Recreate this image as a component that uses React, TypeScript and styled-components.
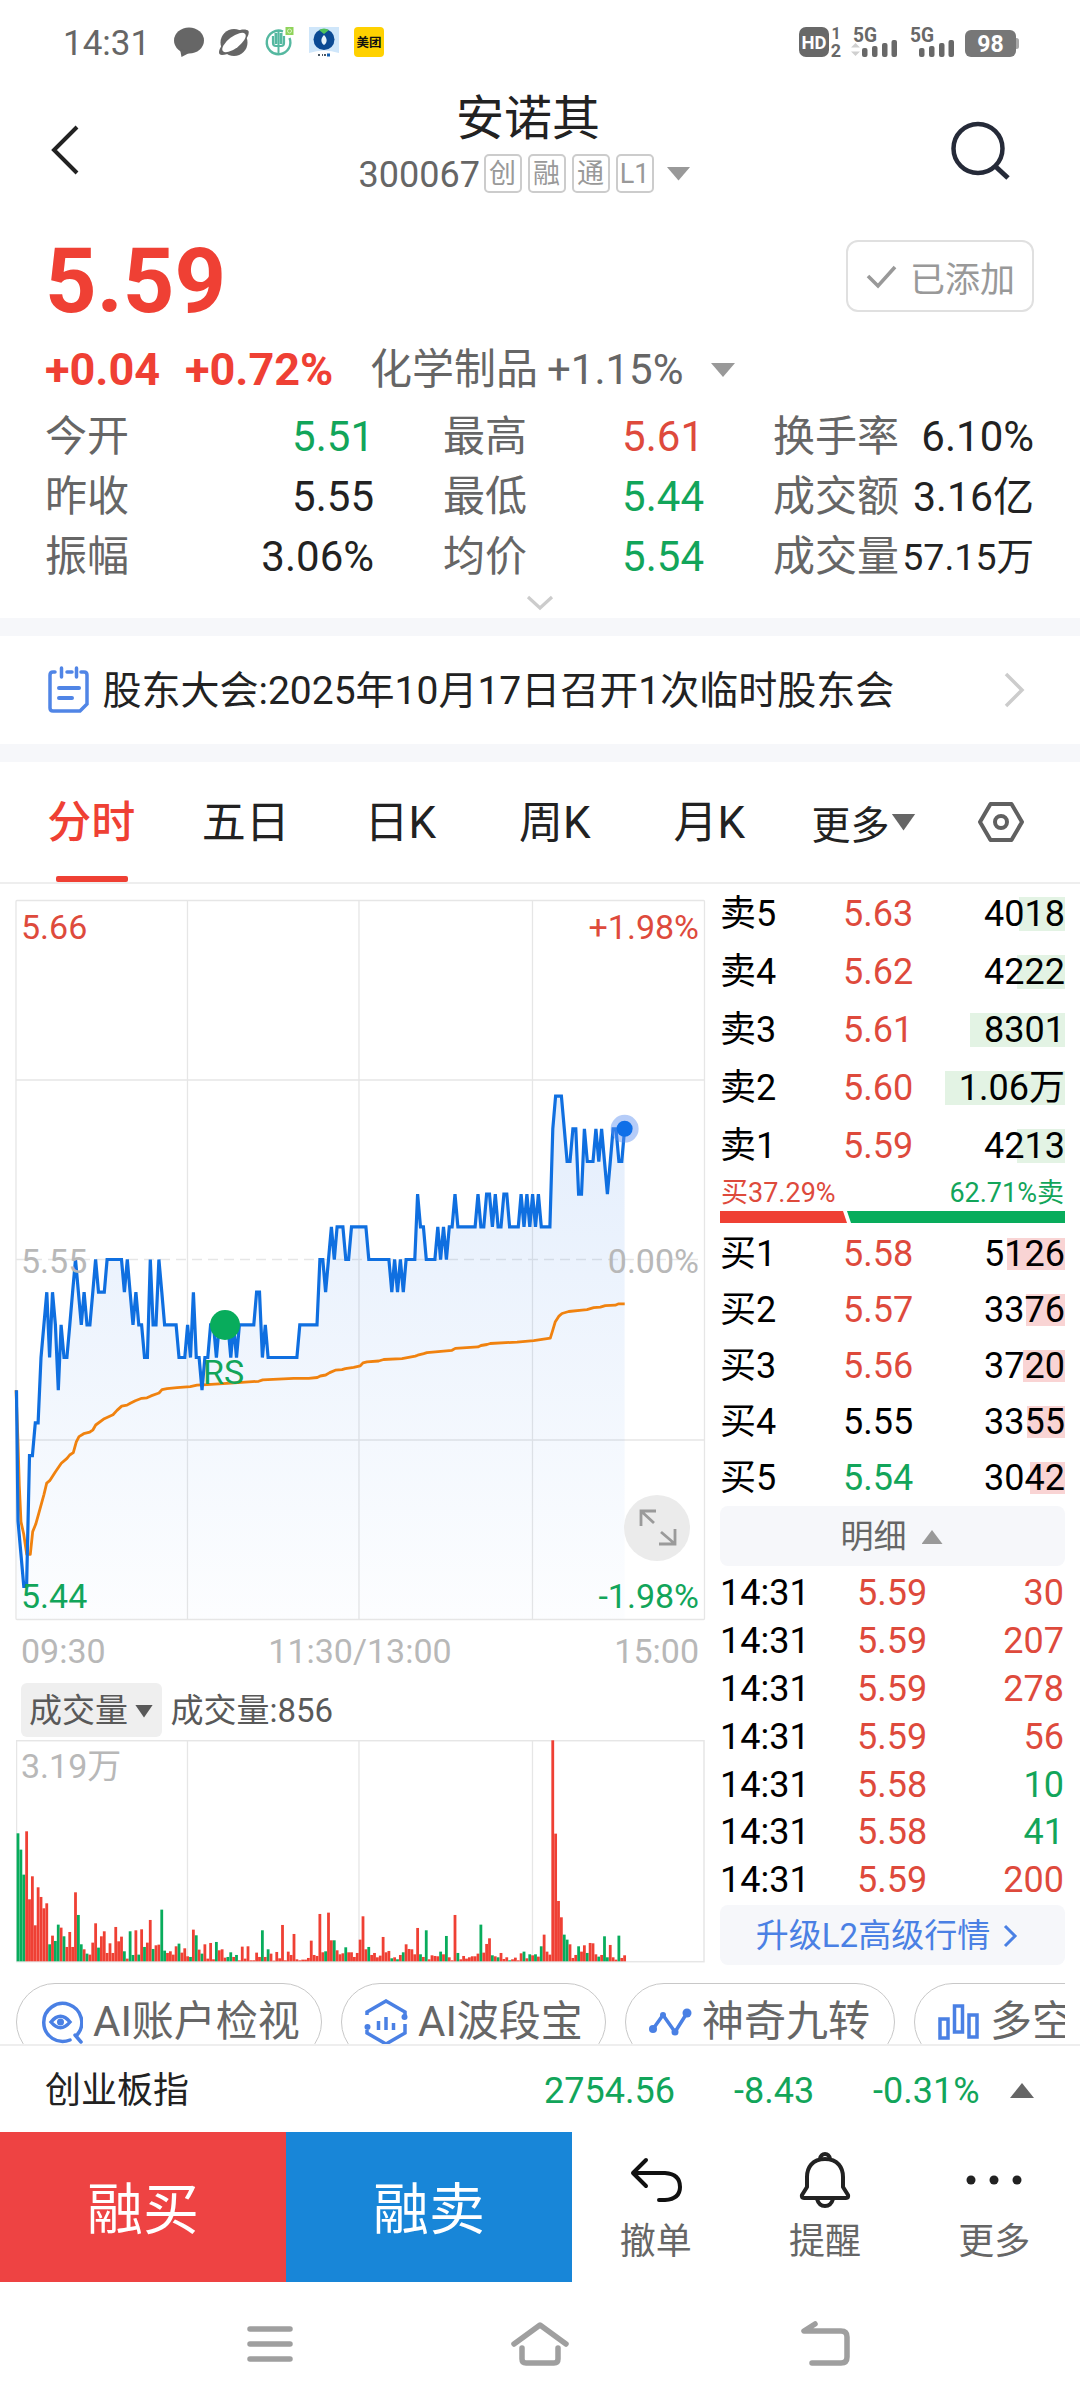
import React from 'react';
import styled, { createGlobalStyle } from 'styled-components';

const RED = '#ef4034';
const UP = '#de4a3c';
const DOWN = '#12a55a';
const GREEN = '#08ac5c';
const INK = '#222';
const GREY = '#666';
const BLUE = '#4a80e4';

const GlobalStyle = createGlobalStyle`
  * { box-sizing: border-box; }
  body { margin: 0; background: #fff; }
  svg { display: block; flex: none; }
`;

const Page = styled.div`
  width: 1080px;
  height: 2408px;
  overflow: hidden;
  display: flex;
  flex-direction: column;
  background: #fff;
  color: ${INK};
  font-family: Roboto, 'Noto Sans CJK SC', sans-serif;
  white-space: nowrap;
`;

/* ---------- status bar ---------- */

const StatusBar = styled.div`
  height: 84px;
  display: flex;
  align-items: center;
  justify-content: space-between;
  padding: 0 61px 0 63px;
`;
const StatusGroup = styled.div<{ $gap: number }>`
  display: flex;
  align-items: center;
  gap: ${(p) => p.$gap}px;
`;
const Clock = styled.span`
  width: 96px;
  font-size: 35px;
  line-height: 40px;
  padding-top: 3px;
  color: ${GREY};
`;

/* ---------- header ---------- */

const Header = styled.header`
  height: 120px;
  display: grid;
  grid-template-columns: 120px 812px 148px;
`;
const HeaderSide = styled.div<{ $pad: number }>`
  padding: 36px 0 0 ${(p) => p.$pad}px;
`;
const TitleBlock = styled.div`
  display: flex;
  flex-direction: column;
  align-items: center;
  padding: 5px 4px 0 0;
`;
const Title = styled.h1`
  margin: 0 0 5px 8px;
  font-size: 48px;
  line-height: 60px;
  font-weight: 400;
`;
const CodeRow = styled.div`
  display: flex;
  align-items: center;
  height: 39px;
  font-size: 36px;
  line-height: 39px;
  color: ${GREY};
`;
const Code = styled.span`
  width: 126px;
  padding: 3px 0 0 1px;
`;
const Tag = styled.span`
  width: 38px;
  height: 39px;
  margin-right: 6px;
  border: 2px solid #ccc;
  border-radius: 5px;
  font-size: 27px;
  line-height: 37px;
  text-align: center;
  color: #999;
`;

const Caret = styled.i<{ $w: number; $h: number; $color: string; $up?: boolean; $ml?: number }>`
  display: block;
  flex: none;
  width: ${(p) => p.$w}px;
  height: ${(p) => p.$h}px;
  margin-left: ${(p) => p.$ml ?? 0}px;
  background: ${(p) => p.$color};
  clip-path: ${(p) => (p.$up ? 'polygon(50% 0, 100% 100%, 0 100%)' : 'polygon(0 0, 100% 0, 50% 100%)')};
`;

/* ---------- quote ---------- */

const Quote = styled.section`
  height: 414px;
  padding: 36px 46px 0 45px;
`;
const PriceRow = styled.div`
  height: 72px;
  display: flex;
  align-items: center;
  justify-content: space-between;
`;
const Price = styled.div`
  padding-top: 12px;
  font-size: 90px;
  line-height: 72px;
  font-weight: 700;
  color: ${RED};
`;
const AddedButton = styled.button`
  width: 188px;
  height: 72px;
  padding: 0 0 0 17px;
  display: flex;
  align-items: center;
  gap: 12px;
  border: 2px solid #e0e0e0;
  border-radius: 12px;
  background: #fff;
  font: inherit;
  font-size: 35px;
  color: #999;
`;
const ChangeRow = styled.div`
  height: 60px;
  margin-top: 28px;
  display: grid;
  grid-template-columns: 140px 185px 177px 164px auto;
  align-items: center;
  font-size: 42px;
  line-height: 60px;
  color: ${GREY};
`;
const Change = styled.b`
  font-size: 45px;
  font-weight: 700;
  color: ${RED};
`;
const Stats = styled.div`
  margin-top: 7px;
  display: grid;
  grid-template-columns: 329px 261px 261px;
  column-gap: 69px;
`;
const Stat = styled.div<{ $color: string; $size?: number }>`
  height: 60px;
  display: flex;
  justify-content: space-between;
  font-size: 42px;
  line-height: 60px;
  color: ${GREY};
  > b {
    font-weight: 400;
    font-size: ${(p) => p.$size ?? 42}px;
    color: ${(p) => p.$color};
  }
`;
const Expand = styled.div`
  display: flex;
  justify-content: center;
  padding: 8px 0 0 1px;
`;

const Notice = styled.section`
  height: 144px;
  border: solid #f6f7fa;
  border-width: 18px 0;
  display: flex;
  align-items: center;
  padding: 0 55px 0 47px;
  font-size: 39px;
`;
const NoticeText = styled.span`
  flex: 1;
  padding: 2px 0 0 12.5px;
  line-height: 60px;
`;

/* ---------- period tabs ---------- */

const Tabs = styled.nav`
  height: 122px;
  border-bottom: 2px solid #eee;
  display: grid;
  grid-template-columns: repeat(5, 154.5px) 189px auto;
  padding-left: 14px;
`;
const Tab = styled.div<{ $active?: boolean }>`
  display: flex;
  flex-direction: column;
  align-items: center;
  font-size: 44px;
  font-weight: ${(p) => (p.$active ? 500 : 400)};
  line-height: 122px;
  height: 120px;
  color: ${(p) => (p.$active ? RED : INK)};
  &::after {
    content: '';
    width: 72px;
    height: 6px;
    margin: -8px 0 0 1px;
    border-radius: 2px;
    background: ${(p) => (p.$active ? RED : 'transparent')};
  }
`;
const MoreTab = styled.div`
  display: flex;
  align-items: center;
  padding-left: 25px;
  font-size: 39px;
  gap: 2px;
`;
const SettingsTab = styled.div`
  display: flex;
  align-items: center;
  padding-left: 2px;
`;

/* ---------- market ---------- */

const Market = styled.section`
  height: 1081px;
  display: grid;
  grid-template-columns: 689px 345px;
  column-gap: 15px;
  padding: 0 15px 0 16px;
`;
const Charts = styled.div`
  padding-top: 16px;
`;
const PriceChart = styled.div`
  position: relative;
  height: 720px;
`;
type LabelProps = { $top: number; $left?: number; $right?: number; $color: string };
const ChartLabel = styled.span<LabelProps>`
  position: absolute;
  top: ${(p) => p.$top}px;
  ${(p) => (p.$left !== undefined ? `left: ${p.$left}px;` : `right: ${p.$right}px;`)}
  font-size: 34px;
  line-height: 40px;
  color: ${(p) => p.$color};
`;
const ExpandButton = styled.div`
  position: absolute;
  right: 15px;
  top: 595px;
  width: 66px;
  height: 66px;
  border-radius: 50%;
  background: #ebebeb;
`;
const TimeAxis = styled.div`
  height: 62px;
  display: flex;
  justify-content: space-between;
  padding: 0 6px 0 5px;
  font-size: 34px;
  line-height: 62px;
  color: #b8b8b8;
`;
const VolumeHead = styled.div`
  height: 58px;
  display: flex;
  align-items: center;
  gap: 8.5px;
  padding: 0 0 2px 5px;
  font-size: 33px;
  line-height: 54px;
  color: #595959;
  > span {
    padding-top: 2px;
  }
`;
const VolumeSelect = styled.div`
  width: 141px;
  height: 54px;
  display: flex;
  align-items: center;
  gap: 7px;
  padding: 2px 0 0 8px;
  border-radius: 6px;
  background: #efefef;
`;
const VolumeChart = styled.div`
  position: relative;
  height: 223px;
`;

const Book = styled.div`
  display: flex;
  flex-direction: column;
  padding-top: 1px;
  color: #000;
`;
const BookRow = styled.div<{ $h: number }>`
  height: ${(p) => p.$h}px;
  display: grid;
  grid-template-columns: 123px 1fr 125px;
  align-items: center;
  font-size: 36px;
  line-height: ${(p) => p.$h}px;
`;
const BookPrice = styled.span<{ $color: string }>`
  color: ${(p) => p.$color};
`;
const Qty = styled.span<{ $bar: number; $tint: string; $h: number }>`
  height: ${(p) => p.$h}px;
  line-height: ${(p) => p.$h}px;
  text-align: right;
  background: linear-gradient(${(p) => p.$tint}, ${(p) => p.$tint}) right / ${(p) => p.$bar}px 100% no-repeat;
`;
const Ratio = styled.div`
  height: 36px;
  display: flex;
  justify-content: space-between;
  padding: 0 1px;
  font-size: 27px;
  line-height: 36px;
`;
const RatioBar = styled.div`
  height: 15px;
  display: flex;
`;
const RatioPart = styled.div<{ $w?: number; $color: string; $clip: string }>`
  ${(p) => (p.$w ? `width: ${p.$w}px;` : 'flex: 1;')}
  height: 12px;
  background: ${(p) => p.$color};
  clip-path: ${(p) => p.$clip};
`;
const PanelButton = styled.div<{ $gap: number; $color: string; $pr?: number }>`
  height: 60px;
  padding: 2px ${(p) => p.$pr ?? 0}px 0 0;
  display: flex;
  align-items: center;
  justify-content: center;
  gap: ${(p) => p.$gap}px;
  border-radius: 8px;
  background: #f6f7fa;
  font-size: 33px;
  line-height: 58px;
  color: ${(p) => p.$color};
`;
const Trades = styled.div`
  height: 339px;
  padding: 3px 1px 0 0;
`;
const Trade = styled.div`
  height: 47.9px;
  display: grid;
  grid-template-columns: 137px 1fr auto;
  font-size: 36px;
  line-height: 48px;
`;
const Colored = styled.span<{ $color: string }>`
  color: ${(p) => p.$color};
`;

/* ---------- tools, index, actions ---------- */

const Tools = styled.div`
  height: 61px;
  margin: 18px 15px 0 16px;
  display: flex;
  gap: 19px;
  overflow: hidden;
`;
const Tool = styled.div<{ $w: number }>`
  flex: none;
  width: ${(p) => p.$w}px;
  height: 78px;
  display: flex;
  align-items: center;
  gap: 10px;
  padding: 0 0 1px 22px;
  border: 1.5px solid #c8c8c8;
  border-radius: 39px;
  font-size: 42px;
  line-height: 60px;
  color: ${GREY};
`;
const IndexRow = styled.div`
  height: 88px;
  border-top: 2px solid #eee;
  display: grid;
  grid-template-columns: 499px 190px 139px 137px auto;
  align-items: center;
  padding: 3px 45px 0 45px;
  font-size: 36px;
  line-height: 60px;
  color: ${DOWN};
`;
const IndexName = styled.span`
  color: ${INK};
`;
const Actions = styled.div`
  height: 150px;
  display: grid;
  grid-template-columns: 286px 286px 1fr 1fr 1fr;
`;
const TradeButton = styled.button<{ $bg: string }>`
  border: 0;
  padding: 0 0 5px;
  background: ${(p) => p.$bg};
  color: #fff;
  font: inherit;
  font-size: 56px;
`;
const Action = styled.div`
  display: flex;
  flex-direction: column;
  align-items: center;
  padding: 18px 2px 0 0;
  gap: 7px;
  font-size: 36px;
  line-height: 50px;
  color: ${GREY};
`;
const NavBar = styled.div`
  flex: 1;
  display: flex;
  align-items: center;
  padding: 0 0 3px 246px;
`;
const NavSlot = styled.div<{ $w: number }>`
  width: ${(p) => p.$w}px;
`;

/* ---------- data ---------- */

/* Ticks below the previous close (5.55), one entry per minute; "a*n" repeats a value. */
const TICKS =
  '4 8 9 10*2 6*2 5*2 3 2 1 3 1 2 4 2 3*2 2 1 0 1 2 1 2*2 1 0 1*3 0*6 1 0 1 2 1 2*2 3*2 0 2*2 0 1 2*5 3*3 2 3 1 3*2 4 3*2 2*2 3 2*4 3 2 3 2*6 1*2 3 2 3*11 2*7 0*2 1 0 -1 0 -1*3 0*2 -1*6 0*8 1 0 1 0 1 0*4 -2 -1*2 0*4 -1 0 -1 0 -1*2 -2 -1*7 -2 -1*2 -2*2 -1 -2 -1*2 -2*2 -1*4 -2 -1 -2 -1 -2 -1 -2 -1*4 -4 -5*3 -4 -3*2 -4*2 -2*2 -4 -3*3 -4 -3 -4 -3 -2 -3 -4*2 -3*2 -4';

const minutes: number[] = TICKS.split(' ').flatMap((token) => {
  const [value, times] = token.split('*');
  return Array<number>(Number(times ?? 1)).fill(Number(value));
});

const W = 688;
const H = 719;
const MID = H / 2;
const minuteX = (i: number) => (i === 0 ? 0.5 : 2 + (i - 1) * 2.875);
const linePoints = minutes.map((t, i) => `${minuteX(i).toFixed(1)},${(MID + t * 32.68).toFixed(1)}`).join(' ');
const lastX = minuteX(minutes.length - 1);
const lastY = MID + minutes[minutes.length - 1] * 32.68;

const AVERAGE: [number, number][] = [
  [0, 1011], [6, 1118], [10, 1208], [15, 1283], [23, 1308], [32, 1350], [43, 1350], [50, 1303], [59, 1288],
  [68, 1266], [84, 1226], [92, 1203], [101, 1198], [118, 1180], [136, 1162], [153, 1152], [161, 1145], [172, 1140],
  [181, 1118], [189, 1107], [203, 1101], [221, 1098], [231, 1093], [239, 1083], [265, 1070], [291, 1062], [303, 1053],
  [317, 1044], [333, 1042], [343, 1038], [358, 1033], [377, 1028], [393, 1027], [405, 1023], [429, 1017], [438, 1010],
  [453, 1008], [483, 1006], [523, 1004], [543, 1001], [573, 1000], [633, 997], [728, 993], [740, 990], [833, 987],
  [878, 987], [904, 985], [913, 982], [929, 980], [941, 975], [958, 970], [978, 969], [988, 967], [1013, 964],
  [1033, 961], [1041, 955], [1053, 953], [1088, 951], [1103, 948], [1158, 946], [1198, 941], [1205, 939], [1223, 936],
  [1233, 934], [1308, 929], [1318, 925], [1386, 922], [1395, 919], [1413, 917], [1423, 915], [1503, 912], [1553, 909],
  [1603, 904], [1610, 888], [1618, 870], [1628, 859], [1638, 853], [1658, 849], [1698, 846], [1713, 845], [1733, 841],
  [1753, 840], [1768, 837], [1798, 836], [1808, 833], [1826, 833],
];
const averagePoints = AVERAGE.map(([x, y]) => `${(x / 3).toFixed(1)},${(y / 2.063).toFixed(1)}`).join(' ');

/* Height of each minute's bar on a 663-unit scale; g = falling, r = rising. */
const VOLUME =
  '384g 335g 260g 390r 186r 255r 108r 222r 193r 159r 174r 51g 77r 61g 110g 101r 75g 43r 88r 43r 207r 139g 51g 36r 23g 20r 56r 114r 41g 75r 90r 25r 54r 25r 103r 60r 74r 30g 8r 90g 19g 93r 20g 96r 43g 56r 124r 37g 48r 50r 155g 32g 25r 30r 20r 45r 53g 26r 39r 15r 13g 95r 78g 35r 23g 51r 8r 55r 6r 58g 33r 36r 11r 13g 27g 13r 19g 3r 44r 8r 45r 3r 3r 26r 13r 93g 13r 36g 23r 2r 28r 9r 109r 3r 29r 19r 82r 6r 3r 5r 5r 10r 62r 19r 16r 142r 27r 30g 146r 63r 63g 33r 21r 24r 42g 27r 27r 13r 25r 65r ' +
  '135r 36r 43g 19r 25r 12r 17r 73r 27r 31r 9g 12r 6g 19r 27g 51r 37r 36r 21r 100r 21g 13r 93g 6r 18r 16r 15r 29g 21r 76g 12r 3r 139r 25g 6r 16r 8r 12r 15r 15r 23r 110g 26r 52r 69r 18g 15r 12g 25r 7r 12r 3g 6r 11r 3r 24r 29g 9r 21g 18r 21g 14r 45g 80r 29r 20r 663r 383r 181r 132r 80g 65g 51r 10r 19r 45g 29r 48r 25g 55r 54r 21r 14g 19r 75g 12g 49r 12r 5r 77g 10r 18r';
const bars = VOLUME.split(' ').map((b) => ({ h: parseInt(b, 10) / 3, fill: b.endsWith('g') ? GREEN : RED }));

type Level = [string, string, string, number];
const SELLS: Level[] = [
  ['卖5', '5.63', '4018', 46],
  ['卖4', '5.62', '4222', 48],
  ['卖3', '5.61', '8301', 95],
  ['卖2', '5.60', '1.06万', 120],
  ['卖1', '5.59', '4213', 48],
];
const BUYS: Level[] = [
  ['买1', '5.58', '5126', 58],
  ['买2', '5.57', '3376', 39],
  ['买3', '5.56', '3720', 42],
  ['买4', '5.55', '3355', 38],
  ['买5', '5.54', '3042', 35],
];
const TRADES: [string, string, string][] = [
  ['5.59', '30', UP],
  ['5.59', '207', UP],
  ['5.59', '278', UP],
  ['5.59', '56', UP],
  ['5.58', '10', DOWN],
  ['5.58', '41', DOWN],
  ['5.59', '200', UP],
];
const STATS: [string, string, string, number?][] = [
  ['今开', '5.51', DOWN],
  ['最高', '5.61', UP],
  ['换手率', '6.10%', INK],
  ['昨收', '5.55', INK],
  ['最低', '5.44', DOWN],
  ['成交额', '3.16亿', INK, 41],
  ['振幅', '3.06%', INK],
  ['均价', '5.54', DOWN],
  ['成交量', '57.15万', INK, 37.5],
];
const priceColor = (price: string) => (price === '5.55' ? '#000' : Number(price) > 5.55 ? UP : DOWN);

/* ---------- icons ---------- */

const Stroke = ({ w, h, d, color, sw = 4, cap = 'butt' }: { w: number; h: number; d: string; color: string; sw?: number; cap?: 'butt' | 'round' }) => (
  <svg width={w} height={h} fill="none" stroke={color} strokeWidth={sw} strokeLinecap={cap} strokeLinejoin={cap === 'round' ? 'round' : 'miter'}>
    <path d={d} />
  </svg>
);

const StatusApps = () => (
  <>
    <svg width="30" height="30" viewBox="0 0 30 30" fill={GREY}>
      <ellipse cx="15" cy="13.5" rx="15" ry="13" />
      <path d="M6 22 7.500 30 17 25z" />
    </svg>
    <svg width="30" height="30" viewBox="0 0 30 30">
      <circle cx="15" cy="15.500" r="13.500" fill={GREY} />
      <path d="M3 18C-1 24-1 28 3 28 6 28 9 27 12 25zM18 4C22 2 28 2 29.500 4 30.500 7 28 11 26 14z" fill={GREY} />
      <ellipse cx="15" cy="15.500" rx="14" ry="5.800" transform="rotate(-37 15 15.500)" fill="#fff" />
    </svg>
    <svg width="30" height="30" viewBox="0 0 30 30" fill="none" stroke="#55b8a0" strokeWidth="2.400">
      <path d="M19 4.500A11.800 11.800 0 1 0 25.500 11" />
      <path d="M14.500 3v24" strokeWidth="2" />
      <path d="M9 9v7q0 3 3 3h5q3 0 3-3V9" strokeWidth="2.200" />
      <path d="M12 6v11M17 6v11" strokeWidth="3" />
      <rect x="21.500" y="0" width="8" height="8" fill="#8fd35a" stroke="none" />
      <circle cx="25.500" cy="4" r="2" stroke="#d8f2c0" strokeWidth="1" />
    </svg>
    <svg width="30" height="30" viewBox="0 0 30 30">
      <path d="M0 0h30v26q-15-5-30 0z" fill="#cfe6fa" />
      <circle cx="15" cy="12.500" r="10.500" fill="#0b4a94" />
      <path d="M10 3q5-3 10 0l-5 4z" fill="#4fc25a" />
      <path d="M15 8c4 4 3 8 0 10-3-2-4-6 0-10z" fill="#e6f2fb" />
      <path d="M9 28h2m2 0h1m1 0h2" stroke="#123" strokeWidth="1.500" />
      <path d="M18 28h3" stroke="#1560b0" strokeWidth="3" />
    </svg>
    <svg width="30" height="30" viewBox="0 0 30 30">
      <rect width="30" height="30" rx="4" fill="#ffd100" />
      <text x="15" y="19.500" fontSize="12.500" fontWeight="700" textAnchor="middle" fill="#111">美团</text>
    </svg>
  </>
);

const Signal = ({ arrows }: { arrows?: boolean }) => (
  <svg width="48" height="48" viewBox="0 -8 48 48" fill="#686868">
    <text x="2" y="15.500" fontSize="20" fontWeight="700" textLength="24" lengthAdjust="spacingAndGlyphs">5G</text>
    {arrows && <path d="M0 21.500 4.500 17 9 21.500zM0 25.500 4.500 30 9 25.500z" fill="#d0d0d0" />}
    <rect x="11" y="22" width="5.500" height="9" rx="2" />
    <rect x="21" y="20" width="5.500" height="11" rx="2" />
    <rect x="31" y="17" width="5.500" height="14" rx="2" />
    <rect x="40.500" y="14" width="5.500" height="17" rx="2" />
  </svg>
);

const StatusSystem = () => (
  <>
    <svg width="44" height="48" viewBox="0 -8 44 48" fill="#686868">
      <rect x="1" y="1" width="30" height="30" rx="7" />
      <text x="16" y="22.500" fontSize="18" fontWeight="700" textAnchor="middle" fill="#fff" textLength="25" lengthAdjust="spacingAndGlyphs">HD</text>
      <text x="38" y="12.500" fontSize="16" fontWeight="700" textAnchor="middle">1</text>
      <text x="38" y="31" fontSize="18" fontWeight="700" textAnchor="middle">2</text>
    </svg>
    <Signal arrows />
    <Signal />
    <svg width="54" height="48" viewBox="0 -8 54 48">
      <rect x="49" y="12" width="5" height="11" rx="2.500" fill="#a8a8a8" />
      <rect x="0" y="4" width="51" height="27" rx="6" fill="#777" />
      <text x="25.500" y="25.500" fontSize="23" fontWeight="700" textAnchor="middle" fill="#fff">98</text>
    </svg>
  </>
);

const SearchIcon = () => (
  <svg width="62" height="64" fill="none" stroke="#252a38" strokeWidth="4.500">
    <circle cx="27" cy="28.500" r="24.500" />
    <path d="M44 46 57 58" strokeWidth="5" />
  </svg>
);

const NoticeIcon = () => (
  <svg width="43" height="48" viewBox="0 0 43 48" fill="none" stroke="#5085e6" strokeWidth="3.500" strokeLinecap="round">
    <path d="M8 6H6Q3 6 3 9v33q0 3 3 3h27l7-7V9q0-3-3-3h-3M20 6h5" />
    <path d="M14.500 2v9M29.500 2v9" />
    <path d="M12 22h20M12 32h13" strokeWidth="4" />
  </svg>
);

const HexIcon = () => (
  <svg width="46" height="42" viewBox="0 0 46 42" fill="none" stroke="#606060" strokeWidth="4">
    <path d="M12.500 3h21L44 21 33.500 39h-21L2 21z" strokeLinejoin="round" />
    <circle cx="23" cy="21" r="6" />
  </svg>
);

const EyeSearchIcon = () => (
  <svg width="44" height="46" viewBox="0 0 44 46" fill="none" stroke={BLUE} strokeWidth="3.500">
    <path d="M38 36A19 19 0 1 0 31 41" strokeLinecap="round" />
    <path d="M36 36 42 43" strokeLinecap="round" />
    <path d="M12 23q9.500-11.500 19 0-9.500 11.500-19 0z" strokeWidth="3.500" />
    <circle cx="21.500" cy="23" r="3.500" fill={BLUE} stroke="none" />
  </svg>
);

const HexBarsIcon = () => (
  <svg width="44" height="46" viewBox="0 0 44 46" fill="none" stroke={BLUE} strokeWidth="3.500">
    <path d="M3 16v-3L22 2l19 11v4M3 31v3l19 11 19-11v-9" />
    <circle cx="3.500" cy="28" r="3" fill={BLUE} stroke="none" />
    <circle cx="40.500" cy="18" r="3" fill={BLUE} stroke="none" />
    <path d="M14.500 22v9M22 18v13M29.500 24v7" />
  </svg>
);

const ZigZagIcon = () => (
  <svg width="44" height="30" viewBox="0 0 44 30" fill="none" stroke={BLUE} strokeWidth="3.500" strokeLinejoin="round">
    <path d="M5 22 15 8l12 17L39 6" />
    <g fill={BLUE} stroke="none">
      <circle cx="5" cy="22" r="4" />
      <circle cx="15" cy="8" r="3" />
      <circle cx="27" cy="25" r="3.500" />
      <circle cx="39" cy="6" r="4.500" />
    </g>
  </svg>
);

const ColumnsIcon = () => (
  <svg width="43" height="38" viewBox="0 0 43 38" fill="none" stroke={BLUE} strokeWidth="3.500">
    <rect x="3" y="16" width="8" height="19" />
    <rect x="17.500" y="3" width="8" height="26" />
    <rect x="32" y="12" width="8" height="22" />
  </svg>
);

const UndoIcon = () => (
  <svg width="56" height="60" fill="none" stroke="#111" strokeWidth="4" strokeLinecap="round" strokeLinejoin="round">
    <path d="M18 10 5 23l13 13M5 23h32q15 1 15 14 0 12-15 13H31" />
  </svg>
);

const BellIcon = () => (
  <svg width="52" height="60" viewBox="0 0 52 60" fill="none" stroke="#222" strokeWidth="4" strokeLinejoin="round">
    <path d="M26 9C13 9 8 18 8 27v10L3 45q-1 3 2 3h42q3 0 2-3l-5-8V27C44 18 39 9 26 9z" />
    <path d="M21 9q1-5 5-5t5 5M18 49q2 7 8 7t8-7" />
  </svg>
);

const DotsIcon = () => (
  <svg width="60" height="60" fill="#222">
    <circle cx="7" cy="30" r="4.500" />
    <circle cx="30" cy="30" r="4.500" />
    <circle cx="53" cy="30" r="4.500" />
  </svg>
);

/* ---------- charts ---------- */

const PricePlot = () => (
  <svg width="689" height="720" overflow="visible" fill="none">
    <defs>
      <linearGradient id="area" x1="0" y1="0" x2="0" y2="1">
        <stop offset="0" stopColor="#1a6fe8" stopOpacity="0.120" />
        <stop offset="1" stopColor="#1a6fe8" stopOpacity="0.012" />
      </linearGradient>
    </defs>
    <g stroke="#e6e6e6" strokeWidth="1.300">
      <rect x="0" y="0.500" width={W + 0.5} height={H} rx="1" />
      <path d={`M171.500 0V${H}M343 0V${H}M516.500 0V${H}M0 180H${W}M0 540H${W}`} />
      <path d={`M0 ${MID}H${W}`} strokeDasharray="10 6" />
    </g>
    <polygon points={`${linePoints} ${lastX},${H} 1,${H}`} fill="url(#area)" />
    <polyline points={averagePoints} stroke="#f0820f" strokeWidth="2.800" strokeLinejoin="round" />
    <polyline points={linePoints} stroke="#0f6fe0" strokeWidth="3.200" strokeLinejoin="miter" strokeMiterlimit="2" />
    <circle cx={lastX} cy={lastY} r="14" fill="#5c8ff0" fillOpacity="0.450" />
    <circle cx={lastX} cy={lastY} r="8" fill="#0f6fe8" />
    <circle cx="209" cy="425" r="15" fill={GREEN} />
  </svg>
);

const VolumePlot = () => (
  <svg width="689" height="223" fill="none">
    <rect x="0.500" y="0.700" width="687.500" height="221" stroke="#e6e6e6" strokeWidth="1.500" />
    <path d="M171.500 1V221M343 1V221M516.500 1V221" stroke="#e6e6e6" strokeWidth="1.300" />
    {bars.map((b, i) => (
      <rect key={i} x={0.6 + i * 2.875} y={221.3 - b.h} width="2.800" height={b.h} fill={b.fill} />
    ))}
  </svg>
);

const BookSide = ({ levels, h, barH, tint }: { levels: Level[]; h: number; barH: number; tint: string }) => (
  <>
    {levels.map(([name, price, qty, bar]) => (
      <BookRow key={name} $h={h}>
        <span>{name}</span>
        <BookPrice $color={priceColor(price)}>{price}</BookPrice>
        <Qty $bar={bar} $tint={tint} $h={barH}>{qty}</Qty>
      </BookRow>
    ))}
  </>
);

export default function App() {
  return (
    <Page>
      <GlobalStyle />
      <StatusBar>
        <StatusGroup $gap={15}>
          <Clock>14:31</Clock>
          <StatusApps />
        </StatusGroup>
        <StatusGroup $gap={9}>
          <StatusSystem />
        </StatusGroup>
      </StatusBar>

      <Header>
        <HeaderSide $pad={50}>
          <Stroke w={30} h={60} d="M27 7 4 30l23 23" color={INK} sw={4} />
        </HeaderSide>
        <TitleBlock>
          <Title>安诺其</Title>
          <CodeRow>
            <Code>300067</Code>
            <Tag>创</Tag>
            <Tag>融</Tag>
            <Tag>通</Tag>
            <Tag>L1</Tag>
            <Caret $w={24} $h={14} $color="#999" $ml={7} />
          </CodeRow>
        </TitleBlock>
        <HeaderSide $pad={19}>
          <SearchIcon />
        </HeaderSide>
      </Header>

      <Quote>
        <PriceRow>
          <Price>5.59</Price>
          <AddedButton>
            <Stroke w={33} h={28} d="M3 14 13 24 30 5" color="#999" sw={3.6} />
            已添加
          </AddedButton>
        </PriceRow>
        <ChangeRow>
          <Change>+0.04</Change>
          <Change>+0.72%</Change>
          <span>化学制品</span>
          <span>+1.15%</span>
          <Caret $w={24} $h={14} $color="#999" />
        </ChangeRow>
        <Stats>
          {STATS.map(([name, value, color, size]) => (
            <Stat key={name} $color={color} $size={size}>
              <span>{name}</span>
              <b>{value}</b>
            </Stat>
          ))}
        </Stats>
        <Expand>
          <Stroke w={28} h={16} d="M2 2 14 13 26 2" color="#ccc" sw={3.2} />
        </Expand>
      </Quote>

      <Notice>
        <NoticeIcon />
        <NoticeText>股东大会:2025年10月17日召开1次临时股东会</NoticeText>
        <Stroke w={22} h={40} d="M3 4 19 20 3 36" color="#ccc" sw={3.5} />
      </Notice>

      <Tabs>
        <Tab $active>分时</Tab>
        <Tab>五日</Tab>
        <Tab>日K</Tab>
        <Tab>周K</Tab>
        <Tab>月K</Tab>
        <MoreTab>
          更多
          <Caret $w={24} $h={17} $color={GREY} />
        </MoreTab>
        <SettingsTab>
          <HexIcon />
        </SettingsTab>
      </Tabs>

      <Market>
        <Charts>
          <PriceChart>
            <PricePlot />
            <ChartLabel $top={7} $left={5} $color={UP}>5.66</ChartLabel>
            <ChartLabel $top={7} $right={6} $color={UP}>+1.98%</ChartLabel>
            <ChartLabel $top={341} $left={5} $color="#b8b8b8">5.55</ChartLabel>
            <ChartLabel $top={341} $right={6} $color="#b8b8b8">0.00%</ChartLabel>
            <ChartLabel $top={676} $left={5} $color={DOWN}>5.44</ChartLabel>
            <ChartLabel $top={676} $right={6} $color={DOWN}>-1.98%</ChartLabel>
            <ChartLabel $top={452} $left={187} $color={DOWN}>RS</ChartLabel>
            <ExpandButton>
              <Stroke w={66} h={66} d="M32 16H17v15M17 16 30 28M51 34v15H35M51 49 37 37" color="#9a9a9a" sw={2.8} />
            </ExpandButton>
          </PriceChart>
          <TimeAxis>
            <span>09:30</span>
            <span>11:30/13:00</span>
            <span>15:00</span>
          </TimeAxis>
          <VolumeHead>
            <VolumeSelect>
              成交量
              <Caret $w={18} $h={13} $color="#595959" />
            </VolumeSelect>
            <span>成交量:856</span>
          </VolumeHead>
          <VolumeChart>
            <VolumePlot />
            <ChartLabel $top={6} $left={5} $color="#b8b8b8">3.19万</ChartLabel>
          </VolumeChart>
        </Charts>

        <Book>
          <BookSide levels={SELLS} h={58} barH={34} tint="#e3f3e4" />
          <Ratio>
            <Colored $color={UP}>买37.29%</Colored>
            <Colored $color={DOWN}>62.71%卖</Colored>
          </Ratio>
          <RatioBar>
            <RatioPart $w={127} $color={RED} $clip="polygon(0 0, 123px 0, 100% 100%, 0 100%)" />
            <RatioPart $color={GREEN} $clip="polygon(0 0, 100% 0, 100% 100%, 4px 100%)" />
          </RatioBar>
          <BookSide levels={BUYS} h={56} barH={32} tint="#f9d4d4" />
          <PanelButton $gap={15} $color={GREY} $pr={2}>
            明细
            <Caret $w={21} $h={14} $color="#999" $up />
          </PanelButton>
          <Trades>
            {TRADES.map(([price, qty, color], i) => (
              <Trade key={i}>
                <span>14:31</span>
                <Colored $color={UP}>{price}</Colored>
                <Colored $color={color}>{qty}</Colored>
              </Trade>
            ))}
          </Trades>
          <PanelButton $gap={13} $color={BLUE} $pr={10}>
            升级L2高级行情
            <Stroke w={16} h={24} d="M2 2 12 12 2 22" color={BLUE} sw={3} />
          </PanelButton>
        </Book>
      </Market>

      <Tools>
        <Tool $w={306}>
          <EyeSearchIcon />
          AI账户检视
        </Tool>
        <Tool $w={265}>
          <HexBarsIcon />
          AI波段宝
        </Tool>
        <Tool $w={270}>
          <ZigZagIcon />
          神奇九转
        </Tool>
        <Tool $w={270}>
          <ColumnsIcon />
          多空
        </Tool>
      </Tools>

      <IndexRow>
        <IndexName>创业板指</IndexName>
        <span>2754.56</span>
        <span>-8.43</span>
        <span>-0.31%</span>
        <Caret $w={24} $h={15} $color={GREY} $up />
      </IndexRow>

      <Actions>
        <TradeButton $bg="#ee4343">融买</TradeButton>
        <TradeButton $bg="#1886d8">融卖</TradeButton>
        <Action>
          <UndoIcon />
          撤单
        </Action>
        <Action>
          <BellIcon />
          提醒
        </Action>
        <Action>
          <DotsIcon />
          更多
        </Action>
      </Actions>

      <NavBar>
        <NavSlot $w={263}>
          <Stroke w={48} h={44} d="M4 7h40M4 22h40M4 37h40" color="#9f9f9f" sw={5.5} cap="round" />
        </NavSlot>
        <NavSlot $w={289}>
          <Stroke w={62} h={50} d="M5 25 31 6 57 25M13 29V40Q13 44 17 44H45Q49 44 49 40V29" color="#9f9f9f" sw={5.5} cap="round" />
        </NavSlot>
        <Stroke w={54} h={50} d="M17 5 6 12H43Q49 12 49 18V38Q49 44 43 44H14" color="#9f9f9f" sw={5.5} cap="round" />
      </NavBar>
    </Page>
  );
}
